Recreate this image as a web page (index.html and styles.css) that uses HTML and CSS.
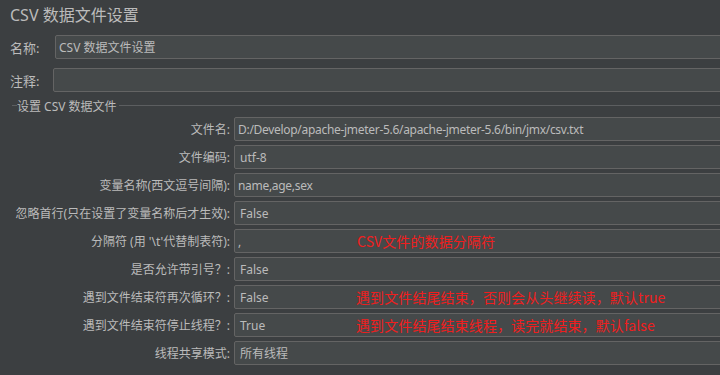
FILE: index.html
```html
<!DOCTYPE html>
<html lang="zh-CN">
<head>
<meta charset="utf-8">
<title>CSV 数据文件设置</title>
<link rel="stylesheet" href="styles.css">
</head>
<body>
<div class="page">
  <h1 class="title">CSV 数据文件设置</h1>
  <div class="top-row name-row">
    <span class="top-label">名称:</span>
    <div class="field">CSV 数据文件设置</div>
  </div>
  <div class="top-row comment-row">
    <span class="top-label">注释:</span>
    <div class="field"></div>
  </div>
  <div class="group-title">
    <span class="rule short"></span>
    <span class="legend">设置 CSV 数据文件</span>
    <span class="rule long"></span>
  </div>
  <div class="form">
    <span class="label">文件名:</span>
    <div class="field latin">D:/Develop/apache-jmeter-5.6/apache-jmeter-5.6/bin/jmx/csv.txt</div>

    <span class="label">文件编码:</span>
    <div class="field combo">utf-8</div>

    <span class="label">变量名称(西文逗号间隔):</span>
    <div class="field latin">name,age,sex</div>

    <span class="label">忽略首行(只在设置了变量名称后才生效):</span>
    <div class="field combo">False</div>

    <span class="label">分隔符 (用 '\t'代替制表符):</span>
    <div class="field">,<span class="note delim">CSV文件的数据分隔符</span></div>

    <span class="label">是否允许带引号？:</span>
    <div class="field combo">False</div>

    <span class="label">遇到文件结束符再次循环？:</span>
    <div class="field combo">False<span class="note">遇到文件结尾结束，否则会从头继续读，默认true</span></div>

    <span class="label">遇到文件结束符停止线程？:</span>
    <div class="field combo">True<span class="note">遇到文件结尾结束线程，读完就结束，默认false</span></div>

    <span class="label">线程共享模式:</span>
    <div class="field combo">所有线程</div>
  </div>
</div>
</body>
</html>
```

FILE: styles.css
```css
* { box-sizing: border-box; }

html, body {
  margin: 0;
  background: #3c3f41;
  overflow: hidden;
}

body {
  width: 720px;
  height: 375px;
  font-family: "Noto Sans", "Noto Sans CJK SC", sans-serif;
  font-size: 12px;
  color: #bbbbbb;
}

.page {
  width: 740px;
}

.title {
  margin: 0;
  padding-left: 10px;
  height: 30px;
  line-height: 30px;
  font-size: 16px;
  font-weight: normal;
  color: #bbbbbb;
}

.top-row {
  display: flex;
  align-items: center;
  padding-left: 10px;
  margin-top: 5px;
}

.top-row + .top-row {
  margin-top: 9px;
}

.top-label {
  flex: none;
  width: 45px;
  font-size: 13px;
}

.comment-row .top-label {
  width: 43px;
}

.field {
  position: relative;
  flex: 1;
  height: 24px;
  display: flex;
  align-items: center;
  padding: 0 3px;
  background: #45494a;
  border: 1px solid #646464;
  border-radius: 2px;
  white-space: nowrap;
  color: #bbbbbb;
}

.field.latin {
  letter-spacing: -0.3px;
}

.field.combo {
  padding-left: 5px;
}

.group-title {
  display: flex;
  align-items: center;
  height: 25px;
  padding-top: 2px;
  padding-left: 12px;
}

.rule {
  height: 1px;
  background: #5c5e60;
}

.rule.short {
  width: 5px;
  flex: none;
}

.rule.long {
  flex: 1;
  margin-left: 2px;
}

.legend {
  font-size: 12px;
  white-space: nowrap;
}

.form {
  display: grid;
  grid-template-columns: 230px 1fr;
  column-gap: 4px;
  row-gap: 4px;
}

.label {
  align-self: center;
  text-align: right;
  white-space: nowrap;
}

.note {
  position: absolute;
  left: 121px;
  top: 50%;
  transform: translateY(-50%);
  font-family: "Noto Sans CJK SC", sans-serif;
  font-size: 14px;
  letter-spacing: 0.1px;
  color: #f01e1e;
}

.note.delim {
  left: 122px;
}
```
